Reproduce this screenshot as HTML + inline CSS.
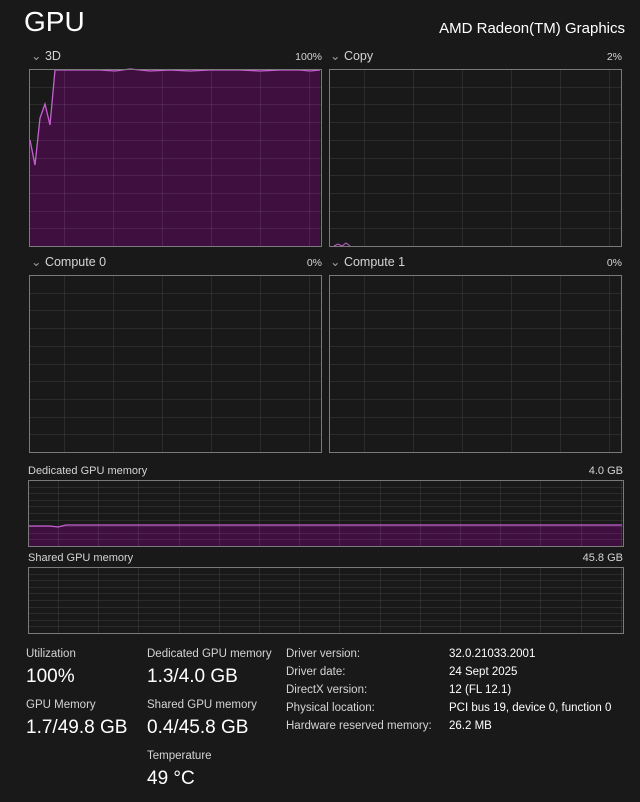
<!DOCTYPE html>
<html><head><meta charset="utf-8"><style>
body{margin:0;width:640px;height:802px;background:#191919;font-family:"Liberation Sans",sans-serif;color:#d4d4d4;position:relative;overflow:hidden}
.t{position:absolute;white-space:nowrap;font-size:11.5px;line-height:14px}
.b{position:absolute;white-space:nowrap;font-size:19px;color:#fff;line-height:22px}
svg{position:absolute;left:0;top:0}
</style></head><body>
<svg id="s" width="640" height="802"></svg>
<div class="b" style="left:24px;top:6px;font-size:28px;line-height:32px">GPU</div>
<div class="t" style="right:15px;top:20px;font-size:15px;line-height:18px;color:#fff">AMD Radeon(TM) Graphics</div>
<div class="t" style="left:31px;top:49px;font-size:12.5px"><span style="color:#999">&#8964;</span> 3D</div>
<div class="t" style="right:318px;top:50px;font-size:10.5px">100%</div>
<div class="t" style="left:330px;top:49px;font-size:12.5px"><span style="color:#999">&#8964;</span> Copy</div>
<div class="t" style="right:18px;top:50px;font-size:10.5px">2%</div>
<div class="t" style="left:31px;top:255px;font-size:12.5px"><span style="color:#999">&#8964;</span> Compute 0</div>
<div class="t" style="right:318px;top:256px;font-size:10.5px">0%</div>
<div class="t" style="left:330px;top:255px;font-size:12.5px"><span style="color:#999">&#8964;</span> Compute 1</div>
<div class="t" style="right:18px;top:256px;font-size:10.5px">0%</div>
<div class="t" style="left:28px;top:464px;font-size:11px">Dedicated GPU memory</div>
<div class="t" style="right:17px;top:464px;font-size:11px">4.0 GB</div>
<div class="t" style="left:28px;top:551px;font-size:11px">Shared GPU memory</div>
<div class="t" style="right:17px;top:551px;font-size:11px">45.8 GB</div>

<div class="t" style="left:26px;top:647px">Utilization</div>
<div class="b" style="left:26px;top:666px">100%</div>
<div class="t" style="left:26px;top:698px">GPU Memory</div>
<div class="b" style="left:26px;top:717px">1.7/49.8 GB</div>
<div class="t" style="left:147px;top:647px">Dedicated GPU memory</div>
<div class="b" style="left:147px;top:666px">1.3/4.0 GB</div>
<div class="t" style="left:147px;top:698px">Shared GPU memory</div>
<div class="b" style="left:147px;top:717px">0.4/45.8 GB</div>
<div class="t" style="left:147px;top:749px">Temperature</div>
<div class="b" style="left:147px;top:768px">49 °C</div>
<div class="t" style="left:286px;top:647px">Driver version:</div>
<div class="t" style="left:286px;top:665px">Driver date:</div>
<div class="t" style="left:286px;top:683px">DirectX version:</div>
<div class="t" style="left:286px;top:701px">Physical location:</div>
<div class="t" style="left:286px;top:719px">Hardware reserved memory:</div>
<div class="t" style="left:449px;top:647px;color:#fff">32.0.21033.2001</div>
<div class="t" style="left:449px;top:665px;color:#fff">24 Sept 2025</div>
<div class="t" style="left:449px;top:683px;color:#fff">12 (FL 12.1)</div>
<div class="t" style="left:449px;top:701px;color:#fff">PCI bus 19, device 0, function 0</div>
<div class="t" style="left:449px;top:719px;color:#fff">26.2 MB</div>
<script>
var s=document.getElementById('s'),h='';
function grid(x,y,w,hh,vx0,vs,ns){
  var o='';
  for(var i=1;i<ns;i++){var yy=(Math.round(y+hh*i/ns)+.5);o+='<line x1="'+x+'" y1="'+yy+'" x2="'+(x+w)+'" y2="'+yy+'" stroke="rgba(255,255,255,0.08)"/>';}
  for(var xx=vx0;xx<x+w;xx+=vs){var q=Math.round(xx)+.5;o+='<line x1="'+q+'" y1="'+y+'" x2="'+q+'" y2="'+(y+hh)+'" stroke="rgba(255,255,255,0.08)"/>';}
  return o;
}
function box(x,y,w,hh){return '<rect x="'+(x+.5)+'" y="'+(y+.5)+'" width="'+w+'" height="'+hh+'" fill="none" stroke="#7a7a7a"/>';}
h+='<path d="M30 247 L30 140 L35 165 L40 118 L45 104 L50 125 L55 70 L320 70 L320 247 Z" fill="#3f103f"/>';
h+=grid(29,69,292,177,64,49,10);
h+='<polyline points="30,140 35,165 40,118 45,104 50,125 55,70 100,70 115,71 130,69 150,71 170,70 190,71 210,70 240,70 260,71 280,70 300,70 310,71 320,70" fill="none" stroke="#c660d0" stroke-width="1.3"/>';
h+=box(29,69,292,177);
h+=grid(329,69,292,177,364,49,10);
h+='<polyline points="334,246 338,244 342,246 346,243 350,246" fill="none" stroke="#c660d0"/>';
h+=box(329,69,292,177);
h+=grid(29,275,292,177,64,49,10)+box(29,275,292,177);
h+=grid(329,275,292,177,364,49,10)+box(329,275,292,177);
h+='<path d="M29 546 L29 526 L50 526 L58 527 L66 525 L622 525 L622 546 Z" fill="#3f103f"/>';
h+=grid(28,480,595,66,58,40.2,10);
h+='<polyline points="29,526 50,526 58,527 66,525 622,525" fill="none" stroke="#c660d0" stroke-width="1.2"/>';
h+=box(28,480,595,66);
h+=grid(28,567,595,66,58,40.2,10)+box(28,567,595,66);
s.innerHTML=h;
</script>
</body></html>
